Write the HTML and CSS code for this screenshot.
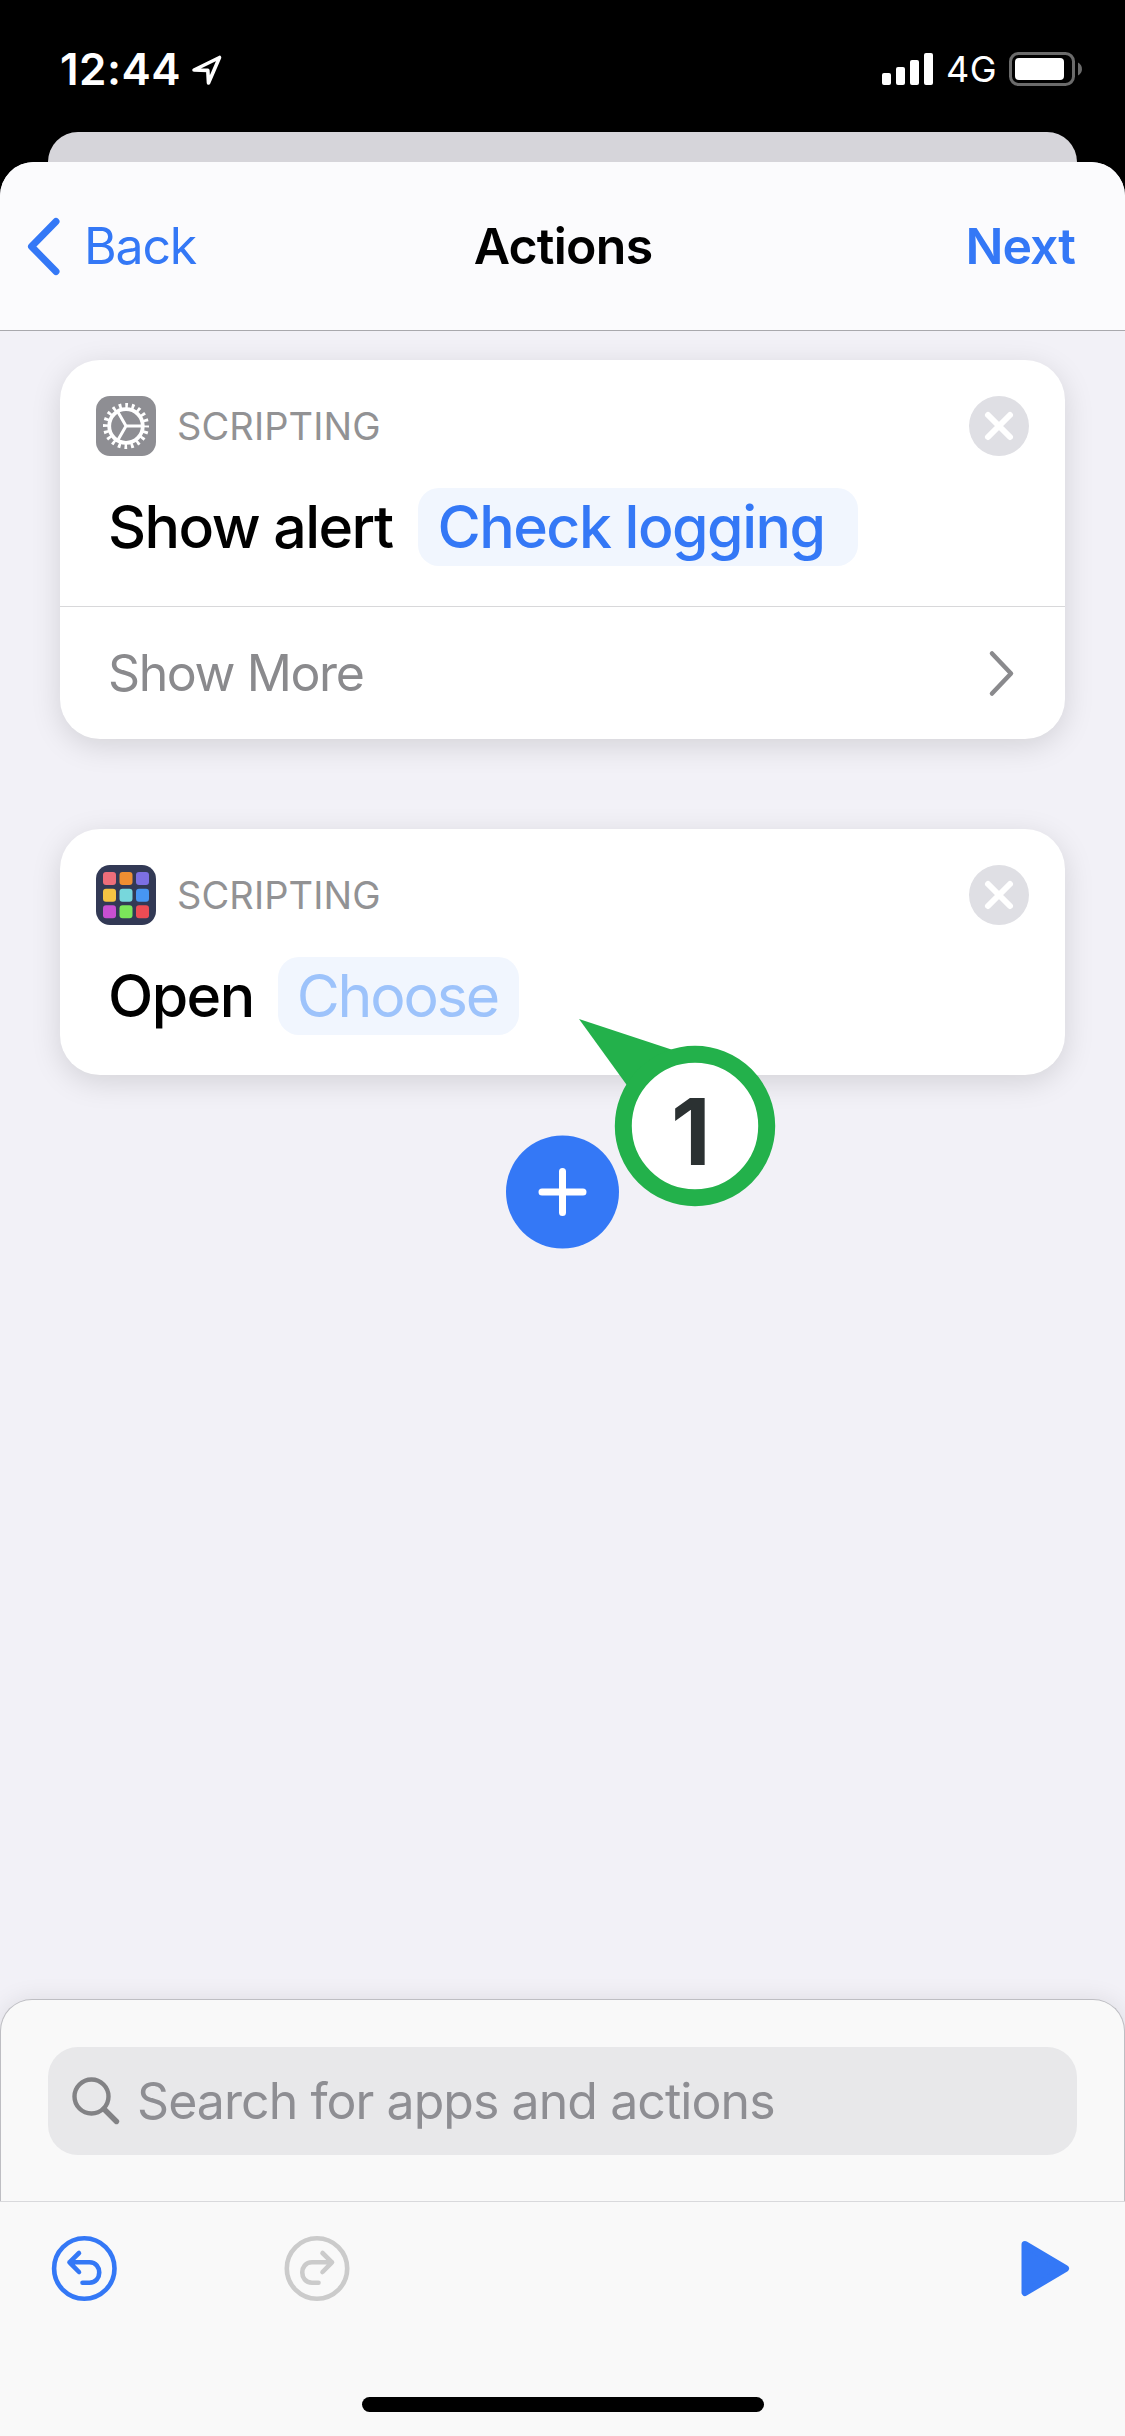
FILE: index.html
```
<!DOCTYPE html>
<html lang="en">
<head>
<meta charset="utf-8">
<title>Actions</title>
<link rel="stylesheet" href="styles.css">
</head>
<body>
<div class="status">
  <span class="time">12:44</span>
  <svg class="location" width="34" height="34" viewBox="0 0 34 34"><path d="M4 18 29.500 5.500 18.500 31 17.800 18.400Z" fill="none" stroke="#fff" stroke-width="3.600" stroke-linejoin="round"/></svg>
  <svg class="signal" width="52" height="34" viewBox="0 0 52 34" fill="#fff"><rect x="0" y="21" width="9" height="12" rx="2"/><rect x="14" y="15" width="9" height="18" rx="2"/><rect x="28" y="8" width="9" height="25" rx="2"/><rect x="42" y="1" width="9" height="32" rx="2"/></svg>
  <span class="network">4G</span>
  <svg class="battery" width="74" height="34" viewBox="0 0 74 34"><rect x="1.500" y="1.500" width="63" height="31" rx="8" fill="none" stroke="#6b6b6b" stroke-width="3"/><rect x="6" y="6" width="49" height="22" rx="4" fill="#fff"/><path d="M69 10.500c5.300 2.500 5.300 10.500 0 13Z" fill="#6b6b6b"/></svg>
</div>
<div class="sheet-behind"></div>
<main class="sheet">
  <header class="nav">
    <a class="back"><svg width="40" height="60" viewBox="0 0 40 60"><path d="M36 5.500 11.500 30.500 36 55.500" fill="none" stroke="#3478f6" stroke-width="7" stroke-linecap="round" stroke-linejoin="round"/></svg><span>Back</span></a>
    <h1 class="title">Actions</h1>
    <a class="next">Next</a>
  </header>
  <section class="canvas">
    <article class="card">
      <div class="card-head">
        <svg width="60" height="60" viewBox="0 0 60 60"><rect width="60" height="60" rx="14" fill="#8e8e93"/><g fill="none" stroke="#fff"><circle cx="30" cy="30" r="16.800" stroke-width="3.800"/><circle cx="30" cy="30" r="20.500" stroke-width="5" stroke-dasharray="2.700 3.740" stroke-dashoffset="1.350"/><path d="M30 30H46M30 30 21.500 15.300M30 30 21.500 44.700" stroke-width="3"/></g></svg>
        <span class="category">SCRIPTING</span>
        <svg class="close" width="60" height="60" viewBox="0 0 60 60"><circle cx="30" cy="30" r="30" fill="#dfdfe4"/><path d="M19 19 41 41M41 19 19 41" stroke="#fff" stroke-width="6" stroke-linecap="round"/></svg>
      </div>
      <div class="action"><span class="verb">Show alert</span><span class="pill alert-text">Check logging</span></div>
      <div class="more"><span>Show More</span><svg width="30" height="50" viewBox="0 0 30 50"><path d="M5 5.500 24 25.500 5 45.500" fill="none" stroke="#8a8a8d" stroke-width="4.500" stroke-linecap="round" stroke-linejoin="round"/></svg></div>
    </article>
    <article class="card">
      <div class="card-head">
        <svg width="60" height="60" viewBox="0 0 60 60"><rect width="60" height="60" rx="14" fill="#323955"/><rect x="7" y="7" width="13" height="13" rx="3" fill="#ee6e7a"/><rect x="23.500" y="7" width="13" height="13" rx="3" fill="#ef8e32"/><rect x="40" y="7" width="13" height="13" rx="3" fill="#7c6fe3"/><rect x="7" y="23.700" width="13" height="13" rx="3" fill="#f6c443"/><rect x="23.500" y="23.700" width="13" height="13" rx="3" fill="#77d7dc"/><rect x="40" y="23.700" width="13" height="13" rx="3" fill="#4796f3"/><rect x="7" y="40.300" width="13" height="13" rx="3" fill="#c94fd2"/><rect x="23.500" y="40.300" width="13" height="13" rx="3" fill="#7be65a"/><rect x="40" y="40.300" width="13" height="13" rx="3" fill="#ed4c54"/></svg>
        <span class="category">SCRIPTING</span>
        <svg class="close" width="60" height="60" viewBox="0 0 60 60"><circle cx="30" cy="30" r="30" fill="#dfdfe4"/><path d="M19 19 41 41M41 19 19 41" stroke="#fff" stroke-width="6" stroke-linecap="round"/></svg>
      </div>
      <div class="action open-app"><span class="verb">Open</span><span class="pill placeholder">Choose</span></div>
      <div class="callout">
        <svg width="200" height="190" viewBox="0 0 200 190"><path d="M0 0 106 35 55 76Z" fill="#23b14b"/><circle cx="116" cy="107" r="71.700" fill="#fff" stroke="#23b14b" stroke-width="17"/></svg>
        <span class="step">1</span>
      </div>
    </article>
    <button class="add"><svg width="114" height="114" viewBox="0 0 114 114"><circle cx="56.500" cy="57" r="56.500" fill="#3478f6"/><path d="M56.500 36.500V77.500M36 57H77" stroke="#fff" stroke-width="7" stroke-linecap="round"/></svg></button>
  </section>
  <section class="drawer">
    <div class="search">
      <svg width="52" height="52" viewBox="0 0 52 52" fill="none" stroke="#828285" stroke-width="4.400" stroke-linecap="round"><circle cx="21.500" cy="21.500" r="17"/><path d="M34 34 46.500 46.500" stroke-width="5.400"/></svg>
      <span>Search for apps and actions</span>
    </div>
  </section>
  <footer class="toolbar">
    <svg width="66" height="66" viewBox="0 0 66 66" fill="none" stroke="#3478f6" stroke-width="4.600" stroke-linecap="round" stroke-linejoin="round"><circle cx="33.300" cy="32.500" r="30.200"/><path d="M28 17 18.500 26.300 28 36M18.500 26.300H38.500C51.500 26.300 51.500 46.800 38.500 46.800H31.500"/></svg>
    <svg class="redo" width="66" height="66" viewBox="0 0 66 66" fill="none" stroke="#cbcbcb" stroke-width="4.600" stroke-linecap="round" stroke-linejoin="round"><circle cx="33" cy="32.500" r="30.200"/><path d="M38.500 17 48 26.300 38.500 36M48 26.300H28C15 26.300 15 46.800 28 46.800H34.500"/></svg>
    <svg class="play" width="50" height="58" viewBox="0 0 50 58"><path d="M4 4.500 44.500 28.500 4 52.500Z" fill="#3478f6" stroke="#3478f6" stroke-width="7" stroke-linejoin="round"/></svg>
  </footer>
  <div class="home"></div>
</main>
</body>
</html>
```
FILE: styles.css
```
* { box-sizing: border-box; }

body {
  margin: 0;
  width: 1125px;
  height: 2436px;
  display: flex;
  flex-direction: column;
  overflow: hidden;
  background: #000;
  font-family: Inter, "Liberation Sans", sans-serif;
  color: #000;
}

svg { display: block; flex: none; }

/* Status bar */
.status {
  height: 132px;
  padding: 42px 42px 0 60px;
  display: flex;
  align-items: flex-start;
  color: #fff;
}
.time { font-size: 44px; font-weight: 600; line-height: 54px; letter-spacing: 0.5px; }
.location { margin: 10px 0 0 9px; }
.signal { margin: 10px 12px 0 auto; }
.network { font-size: 36px; line-height: 55px; letter-spacing: 0.6px; width: 63px; }
.battery { margin-top: 10px; }

.sheet-behind {
  height: 30px;
  margin: 0 48px;
  flex: none;
  border-radius: 30px 30px 0 0;
  background: #d6d5da;
}

.sheet {
  flex: 1;
  display: flex;
  flex-direction: column;
  border-radius: 34px 34px 0 0;
  overflow: hidden;
  background: #f2f1f7;
}

/* Navigation bar */
.nav {
  height: 169px;
  padding: 0 50px 0 20px;
  display: grid;
  grid-template-columns: 1fr auto 1fr;
  align-items: center;
  background: #fbfbfd;
  border-bottom: 1px solid #a9a9ad;
  font-size: 50px;
}
.back, .next { color: #3478f6; }
.back { display: flex; align-items: center; gap: 24px; letter-spacing: -1.2px; }
.title { margin: 0 0 0 31px; font-size: 50px; font-weight: 600; letter-spacing: -0.75px; }
.next { justify-self: end; font-weight: 600; letter-spacing: -1px; }

/* Workflow */
.canvas {
  flex: 1;
  padding: 29px 60px 0;
  display: flex;
  flex-direction: column;
  align-items: stretch;
}
.card {
  position: relative;
  margin-bottom: 90px;
  border-radius: 40px;
  background: #fff;
  box-shadow: 0 7px 30px rgba(0, 0, 0, 0.13);
}
.card + .card { margin-bottom: 60px; }
.card-head { padding: 36px 36px 0; display: flex; align-items: center; }
.category {
  margin-left: 21px;
  font-size: 38px;
  letter-spacing: 0.1px;
  color: #929294;
}
.close { margin-left: auto; }
.action {
  height: 150px;
  padding: 32px 48px 40px;
  display: flex;
  align-items: center;
  gap: 26px;
  font-size: 59px;
  font-weight: 500;
  letter-spacing: -1.54px;
}
.open-app { gap: 24px; }
.verb, .pill { line-height: 77px; }
.verb { height: 78px; }
.pill {
  height: 78px;
  padding-left: 19px;
  border-radius: 21px;
  background: #f1f6fe;
}
.alert-text { width: 440px; letter-spacing: -1.51px; color: #3478f6; }
.placeholder { width: 241px; font-weight: 400; letter-spacing: -2.18px; color: #9dc3fb; }
.more {
  height: 133px;
  padding: 0 48px 0 48px;
  display: flex;
  align-items: center;
  justify-content: space-between;
  border-top: 1px solid #d8d8da;
  font-size: 50px;
  letter-spacing: -1.4px;
  color: #8a8a8d;
}

/* Numbered annotation that sits over the card edge */
.callout { position: absolute; left: 519px; top: 190px; z-index: 1; }
.step {
  position: absolute;
  left: 92px;
  top: 55px;
  font-size: 92px;
  font-weight: 700;
  line-height: 115px;
  color: #2b3132;
}

.add { align-self: center; padding: 0; border: 0; background: none; }

/* Search drawer */
.drawer {
  height: 202px;
  padding: 47px 47px 0;
  border: 1px solid #bebec3;
  border-bottom: 0;
  border-radius: 32px 32px 0 0;
  background: #f9f9f9;
  box-shadow: 0 0 24px rgba(0, 0, 0, 0.09);
}
.search {
  height: 108px;
  padding-left: 22px;
  display: flex;
  align-items: center;
  gap: 15px;
  border-radius: 30px;
  background: #e8e8ea;
  font-size: 50px;
  line-height: 62px;
  letter-spacing: -0.94px;
  color: #8e8e93;
}

.toolbar {
  position: relative;
  height: 196px;
  padding: 34px 54px 0 51px;
  display: flex;
  align-items: flex-start;
  border-top: 1px solid #d9d9dc;
  background: #f9f9f9;
}
.redo { margin-left: 167px; }
.play { margin: 4px 0 0 auto; }

.home {
  position: relative;
  height: 39px;
  background: #f9f9f9;
}
.home::before {
  content: "";
  display: block;
  width: 402px;
  height: 15px;
  margin: 0 auto;
  border-radius: 8px;
  background: #000;
}
```
